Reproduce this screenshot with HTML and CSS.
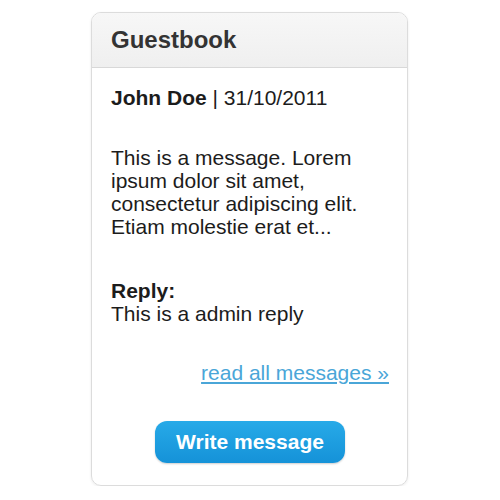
FILE: index.html
```html
<!DOCTYPE html>
<html lang="en">
<head>
  <meta charset="UTF-8" />
  <title>Guestbook</title>
  <link rel="stylesheet" href="styles.css">
</head>
<body>
  <div class="guestbook">
    <div class="guestbook-header">
      <h2>Guestbook</h2>
    </div>
    <div class="guestbook-body">
      <p class="entry-meta"><strong>John Doe</strong> | 31/10/2011</p>
      <p class="entry-text">This is a message. Lorem ipsum dolor sit amet, consectetur adipiscing elit. Etiam molestie erat et...</p>
      <p class="entry-reply"><strong>Reply:</strong><br>This is a admin reply</p>
      <div class="read-all">
        <a href="#">read all messages &raquo;</a>
      </div>
      <div class="actions">
        <a class="write-button" href="#">Write message</a>
      </div>
    </div>
  </div>
</body>
</html>
```

FILE: styles.css
```css
body {
  margin: 0;
  background: #fff;
  font-family: 'Liberation Sans', Arial, sans-serif;
  color: #1c1c1c;
}

.guestbook {
  width: 315px;
  margin: 12px 0 0 91px;
  border: 1px solid #dcdcdc;
  border-radius: 10px;
  box-shadow: 0 1px 3px rgba(0, 0, 0, 0.08);
  overflow: hidden;
}

.guestbook-header {
  height: 54px;
  display: flex;
  align-items: center;
  padding: 0 19px;
  background: linear-gradient(#f7f7f7, #efefef);
  border-bottom: 1px solid #d8d8d8;
}

.guestbook-header h2 {
  margin: 0;
  font-size: 24px;
  color: #333;
}

.guestbook-body {
  padding: 18px 18px 22px 19px;
  font-size: 21px;
  line-height: 23px;
}

.guestbook-body p {
  margin: 0;
}

.entry-meta {
  margin-bottom: 37px !important;
}

.entry-reply {
  margin-top: 41px !important;
}

.read-all {
  text-align: right;
  margin-top: 36px;
}

.read-all a {
  color: #4aa6d8;
  text-decoration: underline;
}

.actions {
  display: flex;
  justify-content: center;
  margin-top: 37px;
}

.write-button {
  display: block;
  width: 190px;
  height: 42px;
  line-height: 42px;
  text-align: center;
  border-radius: 12px;
  background: linear-gradient(#27aae8, #1592d8);
  color: #fff;
  font-weight: bold;
  font-size: 21px;
  text-decoration: none;
  box-shadow: 0 1px 2px rgba(0, 0, 0, 0.2);
}
```
